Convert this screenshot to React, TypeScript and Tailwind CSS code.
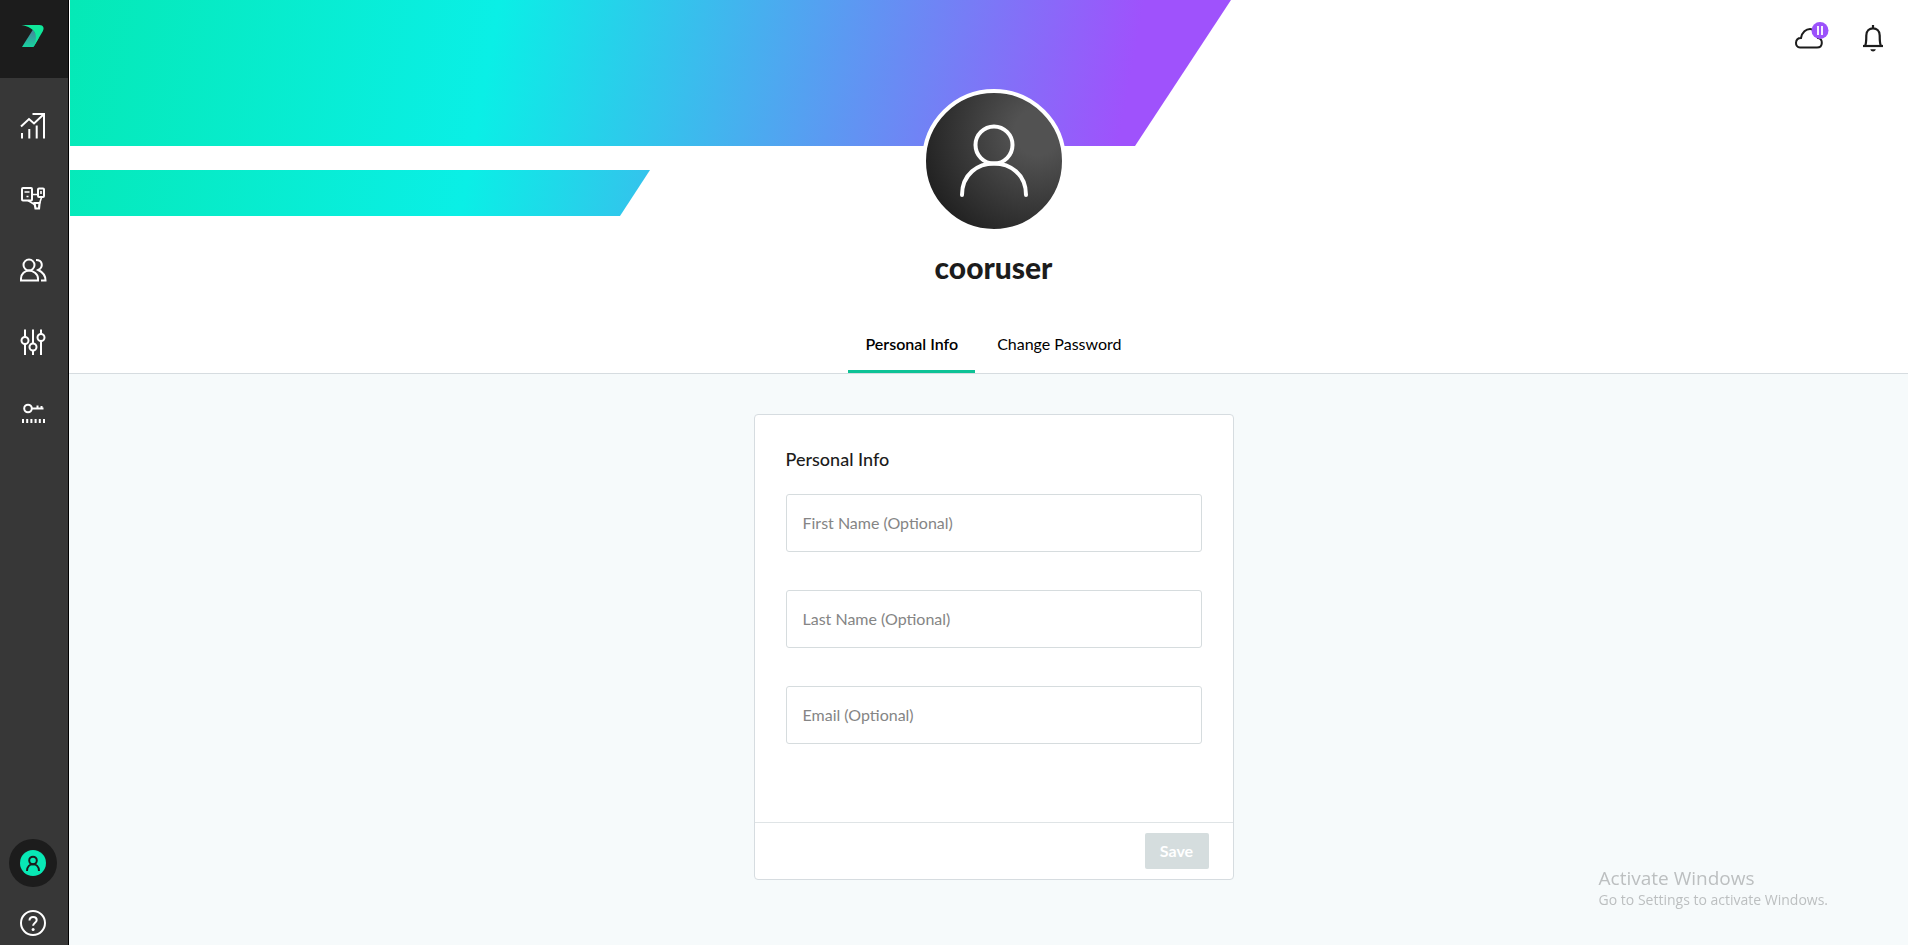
import type { ReactNode } from "react";

interface NavItem {
  label: string;
  icon: ReactNode;
}

interface Field {
  id: string;
  type: string;
  label: string;
}

const NAV_ITEMS: NavItem[] = [
  {
    label: "Analytics",
    icon: (
      <>
        <path d="M3 15.5 11 8l5 4.5L25.500 3.500" strokeWidth="2" />
        <path d="M14.500 3H26V27.500" strokeWidth="2" />
        <path d="M4 22V27.500M11.300 18v9.500M18.700 14.500v13" strokeWidth="2" />
      </>
    ),
  },
  {
    label: "Workflows",
    icon: (
      <>
        <rect x="4" y="5" width="10" height="12.500" rx="1" strokeWidth="2" />
        <rect x="20" y="5.500" width="6" height="8.500" rx="1" strokeWidth="2" />
        <path d="M16.500 20h5l-.500 5.500h-3.500z" strokeWidth="2.200" />
        <path d="M14 11.500h6M10 17.500l6.500 4M23.500 14.500l-2 6" strokeWidth="1.600" />
        <path d="M6.500 9h5M8.500 13.500h2M23 8v3" strokeWidth="1.600" />
      </>
    ),
  },
  {
    label: "Users",
    icon: (
      <>
        <circle cx="11" cy="10" r="5.500" strokeWidth="2" />
        <path d="M3 25.500v-2c0-4.500 4-8 8-8s9 3.500 9 8v2z" strokeWidth="2" />
        <path d="M18 5c7 0 7.500 7.300 2.200 10C24.500 17 27.500 19.500 27.500 25.500H23" strokeWidth="2" />
      </>
    ),
  },
  {
    label: "Settings",
    icon: (
      <>
        <circle cx="7" cy="13.500" r="3.500" strokeWidth="2" />
        <circle cx="15" cy="20" r="3.500" strokeWidth="2" />
        <circle cx="23" cy="10.500" r="3.500" strokeWidth="2" />
        <path d="M7 2.500v7.500M7 17v11M15 2.500v14M15 23.500v4.500M23 2.500V7M23 14v14" strokeWidth="2" />
      </>
    ),
  },
  {
    label: "Licenses",
    icon: (
      <>
        <circle cx="10" cy="9.500" r="3.800" strokeWidth="2" />
        <path d="M14 9.500h11.500M19.500 9.500V6.500M23.500 9.500V7" strokeWidth="2" />
        <path d="M4 22h23" strokeWidth="4" strokeDasharray="2 2.200" />
      </>
    ),
  },
];

const FIELDS: Field[] = [
  { id: "firstName", type: "text", label: "First Name (Optional)" },
  { id: "lastName", type: "text", label: "Last Name (Optional)" },
  { id: "email", type: "email", label: "Email (Optional)" },
];

function Logo() {
  return (
    <svg viewBox="0 0 24 24" className="h-6 w-6" aria-hidden="true">
      <defs>
        <linearGradient id="logoFold" x1="0" y1="0" x2="0" y2="1">
          <stop offset="0" stopColor="#4a7f9c" />
          <stop offset="1" stopColor="#17d3a0" />
        </linearGradient>
      </defs>
      <path d="M12 6.500 1 24H12.500l5-8.500z" fill="url(#logoFold)" />
      <path d="M.500 2h18c4 0 5 3.300 3.300 6.200L12.500 24c5.500-12 2-19-12-22z" fill="#10e79b" />
    </svg>
  );
}

function Sidebar() {
  return (
    <aside className="flex w-[69px] shrink-0 flex-col border-r border-black bg-[#373737]">
      <a href="#home" aria-label="Home" className="flex h-[78px] items-center justify-center bg-[#1c1c1c] pr-0.5 pb-2">
        <Logo />
      </a>
      <nav className="flex flex-col pt-3">
        {NAV_ITEMS.map((item) => (
          <a
            key={item.label}
            href={`#${item.label.toLowerCase()}`}
            aria-label={item.label}
            className="flex h-[72px] items-center justify-center pr-0.5"
          >
            <svg viewBox="0 0 30 30" className="h-[30px] w-[30px]" fill="none" stroke="#fff">
              {item.icon}
            </svg>
          </a>
        ))}
      </nav>
      <div className="mt-auto flex flex-col items-center gap-[22px] pr-0.5 pb-2">
        <button type="button" aria-label="Profile" className="flex h-12 w-12 items-center justify-center rounded-full bg-[#1c1c1c]">
          <svg viewBox="0 0 26 26" className="h-[26px] w-[26px]" fill="none" stroke="#1c1c1c" strokeWidth="2">
            <circle cx="13" cy="13" r="13" fill="#08e8b5" stroke="none" />
            <circle cx="13" cy="10.500" r="3.800" />
            <path d="M7 21c0-9 12-9 12 0" />
          </svg>
        </button>
        <button type="button" aria-label="Help">
          <svg viewBox="0 0 28 28" className="h-7 w-7" fill="none" stroke="#fff" strokeWidth="2">
            <circle cx="14" cy="14" r="12" />
            <path d="M10.500 11.500c0-5 7.200-4.500 7.200-.500 0 2.700-3.600 2.800-3.600 5.800" />
            <circle cx="14.100" cy="20.500" r="1.500" fill="#fff" stroke="none" />
          </svg>
        </button>
      </div>
    </aside>
  );
}

function Banner() {
  return (
    <svg className="absolute top-0 left-px" width="1161" height="216" aria-hidden="true">
      <defs>
        <linearGradient id="banner" gradientUnits="userSpaceOnUse" x1="0" y1="0" x2="1040" y2="190">
          <stop offset="0" stopColor="#05e9b6" />
          <stop offset="0.400" stopColor="#0aefe6" />
          <stop offset="1" stopColor="#9f52fc" />
        </linearGradient>
      </defs>
      <path d="M0 0h1161l-96 146H0z" fill="url(#banner)" />
      <path d="M0 170h580l-30 46H0z" fill="url(#banner)" />
    </svg>
  );
}

function HeaderActions() {
  return (
    <div className="absolute top-5 right-5 flex items-center gap-8">
      <button type="button" aria-label="Cloud sync paused">
        <svg viewBox="0 0 34 34" className="h-[34px] w-[34px] overflow-visible" fill="none">
          <path
            d="M8 27.500h17c6.500 0 6-9 1-9.500C25.500 6 11 6 9 18 2.500 18 2.500 27.500 8 27.500z"
            stroke="#1c1c1c"
            strokeWidth="2"
          />
          <circle cx="28" cy="10.500" r="8.500" fill="#9b51fb" />
          <path d="M26 6v9M30 6v9" stroke="#fff" strokeWidth="1.800" />
        </svg>
      </button>
      <button type="button" aria-label="Notifications">
        <svg viewBox="0 0 30 34" className="h-[34px] w-[30px]" fill="none" stroke="#1c1c1c" strokeWidth="2.200">
          <path d="M15 5v4M7 26c1.300-2 1.300-4 1.300-10.500C8.300 6 21.700 6 21.700 15.500 21.700 22 21.700 24 23 26" />
          <path d="M5 26h20" />
          <path d="M12.300 29.200h5.500c-.800 3-4.700 3-5.500 0z" fill="#1c1c1c" stroke="none" />
        </svg>
      </button>
    </div>
  );
}

function ProfileHeader() {
  return (
    <header className="relative border-b border-[#d6dce0] bg-white pl-2.5">
      <Banner />
      <HeaderActions />
      <div className="relative mx-auto flex w-fit flex-col items-center pt-[89px]">
        <div className="flex h-[144px] w-[144px] items-center justify-center rounded-full border-4 border-white bg-[radial-gradient(circle_at_80%_30%,#525252_15%,#1c1c1c_85%)] bg-origin-border">
          <svg viewBox="0 0 68 74" className="h-[74px] w-[68px]" fill="none" stroke="#fff" strokeWidth="4" strokeLinecap="round">
            <circle cx="34" cy="21" r="18.500" />
            <path d="M2 71c0-42 64-42 64 0" />
          </svg>
        </div>
        <h1 className="mt-3.5 text-3xl leading-10 font-black text-[#1c1c1c]">cooruser</h1>
        <div role="tablist" className="mt-[26px] flex gap-[5px]">
          <button
            type="button"
            role="tab"
            aria-selected="true"
            className="h-[60px] border-b-[3px] border-[#0dc296] px-[17px] pt-1 text-base font-semibold text-black"
          >
            Personal Info
          </button>
          <button
            type="button"
            role="tab"
            aria-selected="false"
            className="h-[60px] border-b-[3px] border-transparent px-[17px] pt-1 text-base text-black"
          >
            Change Password
          </button>
        </div>
      </div>
    </header>
  );
}

function TextField({ id, type, label }: Field) {
  return (
    <div className="relative">
      <input
        id={id}
        type={type}
        placeholder=" "
        className="peer block h-[58px] w-full rounded-[3px] border border-[#d6dcde] px-4 text-base text-[#1c1c1c] outline-none"
      />
      <label
        htmlFor={id}
        className="pointer-events-none absolute inset-y-0 left-[17px] flex items-center text-base text-[#858585] peer-[:not(:placeholder-shown)]:hidden"
      >
        {label}
      </label>
    </div>
  );
}

function PersonalInfoForm() {
  return (
    <form className="w-[480px] max-w-full rounded-sm border border-[#d6dce0] bg-white">
      <div className="px-[31px] pt-8 pb-[78px]">
        <h2 className="text-lg leading-6 font-medium text-[#1c1c1c]">Personal Info</h2>
        <div className="mt-[23px] flex flex-col gap-[38px]">
          {FIELDS.map((field) => (
            <TextField key={field.id} {...field} />
          ))}
        </div>
      </div>
      <div className="flex justify-end border-t border-[#dfe4e6] py-2.5 pr-6">
        <button type="submit" disabled className="h-9 w-16 rounded-xs bg-[#d5ddde] text-base font-bold text-white">
          Save
        </button>
      </div>
    </form>
  );
}

function ActivationNotice() {
  return (
    <div className="pointer-events-none fixed right-20 bottom-[35px] font-['Open_Sans',sans-serif] text-[#bcbfc0]">
      <p className="text-[19px] leading-6">Activate Windows</p>
      <p className="text-sm leading-5">Go to Settings to activate Windows.</p>
    </div>
  );
}

export default function App() {
  return (
    <div className="flex min-h-screen bg-[#f6fafb] font-['Lato',sans-serif]">
      <Sidebar />
      <main className="flex min-w-0 flex-1 flex-col">
        <ProfileHeader />
        <section className="flex justify-center pt-10 pb-10 pl-2.5">
          <PersonalInfoForm />
        </section>
      </main>
      <ActivationNotice />
    </div>
  );
}
